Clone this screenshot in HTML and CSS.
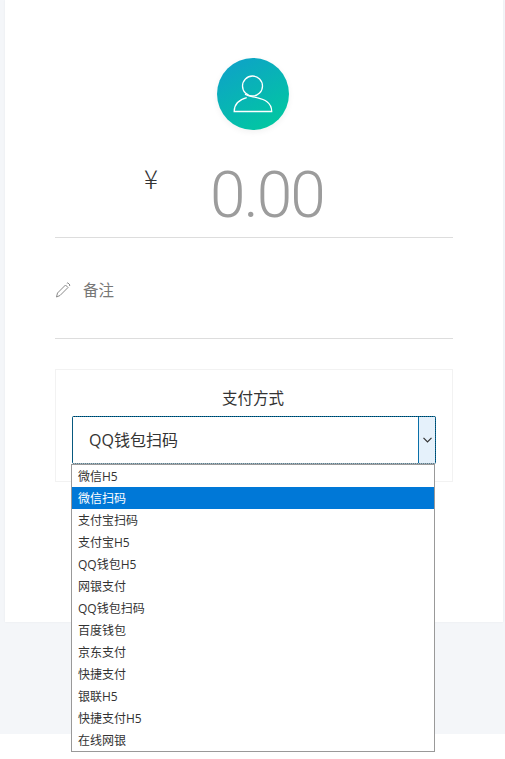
FILE: index.html
```html
<!DOCTYPE html>
<html lang="en">
<head>
    <meta charset="UTF-8">
    <meta name="viewport" content="width=device-width, initial-scale=1.0">
    <title>支付</title>
    <link rel="stylesheet" href="styles.css">
</head>
<body>
    <div class="backdrop">
        <div class="card">
            <div class="avatar">
                <svg width="40" height="38" viewBox="0 0 40 38" fill="none" stroke="#fff" stroke-width="1.3">
                    <circle cx="19.5" cy="11" r="10"/>
                    <path d="M12 19.3 C16 22 20 21.5 24 22.7 C31 24.5 38.7 27 38.7 36.5 H1.2 C1.2 29 7 24.5 13.7 22.7"/>
                </svg>
            </div>
            <div class="amount">
                <span class="currency">¥</span>
                <span class="value">0.00</span>
            </div>
            <div class="remark">
                <svg width="16" height="16" viewBox="0 0 16 16" fill="none" stroke="#8a8a8a" stroke-width="1">
                    <path d="M1.5 15 L2.5 11 L10.5 3 L13 5.5 L5 13.5 Z M11.8 1.5 L12.8 0.8 L15 3 L14.3 4"/>
                </svg>
                <span>备注</span>
            </div>
            <div class="pay-panel">
                <div class="pay-title">支付方式</div>
                <div class="select-box">
                    <div class="select-value">QQ钱包扫码</div>
                    <div class="select-arrow">
                        <svg width="9" height="6" viewBox="0 0 9 6" fill="none" stroke="#333" stroke-width="1.2">
                            <path d="M0.5 0.8 L4.5 4.8 L8.5 0.8"/>
                        </svg>
                    </div>
                </div>
            </div>
        </div>
    </div>
    <ul class="options">
        <li>微信H5</li>
        <li class="selected">微信扫码</li>
        <li>支付宝扫码</li>
        <li>支付宝H5</li>
        <li>QQ钱包H5</li>
        <li>网银支付</li>
        <li>QQ钱包扫码</li>
        <li>百度钱包</li>
        <li>京东支付</li>
        <li>快捷支付</li>
        <li>银联H5</li>
        <li>快捷支付H5</li>
        <li>在线网银</li>
    </ul>
</body>
</html>
```

FILE: styles.css
```css
body { margin: 0; background: #fff; font-family: "Open Sans", "Noto Sans CJK SC", sans-serif; color: #333; }
.backdrop { height: 734px; padding: 0 2px 0 5px; box-sizing: border-box; background: #f4f6f9; }
.card { height: 622px; padding: 58px 50px 0; box-sizing: border-box; background: #fff; box-shadow: 0 0 2px rgba(0, 0, 0, 0.06); }
.avatar { width: 72px; height: 72px; margin-left: 162px; display: flex; align-items: center; justify-content: center; border-radius: 50%; background: linear-gradient(150deg, #0f9fcb, #00cc9c); box-shadow: 0 2px 6px rgba(0, 0, 0, 0.06); }
.amount { height: 107px; display: flex; border-bottom: 1px solid #ddd; }
.currency { margin: 33px 0 0 89px; font-size: 26px; line-height: 30px; font-family: "Noto Sans CJK SC", sans-serif; font-weight: 300; }
.value { margin: 28px 0 0 52px; font-family: Roboto, sans-serif; font-weight: 300; font-size: 64px; line-height: 76px; letter-spacing: -2px; color: #9c9c9c; }
.remark { height: 101px; display: flex; align-items: flex-start; gap: 12px; padding-top: 44px; box-sizing: border-box; border-bottom: 1px solid #ddd; font-size: 15.5px; line-height: 16px; color: #777; }
.pay-panel { height: 113px; margin-top: 30px; padding: 18px 16px 0; box-sizing: border-box; border: 1px solid #f2f2f2; }
.pay-title { margin-left: -2px; text-align: center; font-size: 15.5px; line-height: 20px; color: #333; }
.select-box { height: 48px; width: 364px; margin-top: 8px; display: flex; box-sizing: border-box; border: 1px dotted #06384f; border-radius: 2px; background: linear-gradient(#0a7ab0 calc(100% - 1px), #fff 0) border-box; }
.select-value { flex: 1; padding-left: 16px; font-size: 16px; line-height: 46px; color: #333; background: #fff; }
.select-arrow { width: 16px; display: flex; align-items: center; justify-content: center; background: #e5f1fb; border-left: 1px solid #0a6fa8; }
.options { position: absolute; left: 71px; top: 464px; width: 362px; margin: 0; padding: 0; list-style: none; background: #fff; border: 1px solid #999; }
.options li { height: 22px; padding-left: 6px; font-size: 12px; line-height: 23px; color: #333; }
.options .selected { background: #0078d7; color: #fff; }
```
